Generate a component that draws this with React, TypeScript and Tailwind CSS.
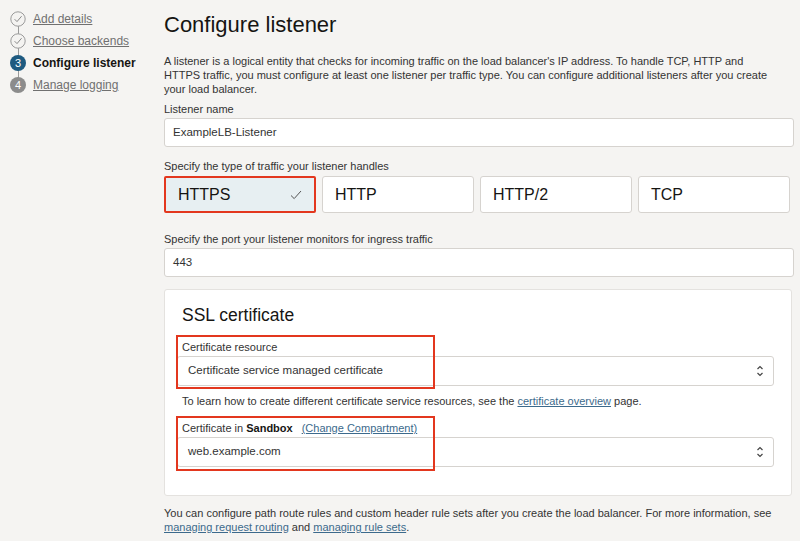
const font = { fontFamily: '"Liberation Sans", Arial, sans-serif' };

function DoneIcon() {
  return (
    <svg width="16" height="16" viewBox="0 0 16 16" className="shrink-0">
      <circle cx="8" cy="8" r="7.2" fill="#f4f3f1" stroke="#9a9a9a" strokeWidth="1" />
      <path d="M4.6 8.2 L7 10.6 L11.6 5.2" fill="none" stroke="#8a8a8a" strokeWidth="1" />
    </svg>
  );
}

function NumIcon({ n, color }: { n: number; color: string }) {
  return (
    <span
      className="w-4 h-4 rounded-full flex items-center justify-center text-[11px] text-white shrink-0"
      style={{ backgroundColor: color }}
    >
      {n}
    </span>
  );
}

function UpDown() {
  return (
    <svg width="10" height="14" viewBox="0 0 10 14" className="shrink-0">
      <path d="M2.5 5 L5 2.5 L7.5 5" fill="none" stroke="#444" strokeWidth="1.2" />
      <path d="M2.5 9 L5 11.5 L7.5 9" fill="none" stroke="#444" strokeWidth="1.2" />
    </svg>
  );
}

function Steps() {
  return (
    <div className="w-[164px] shrink-0 pl-[10px] pt-[11px] relative text-[12px]">
      {/* connector line */}
      <div className="absolute left-[18px] top-[26px] h-[56px] w-px bg-[#9a9a9a]" />
      <div className="flex flex-col gap-[6px] relative">
        <div className="flex items-center gap-[7px] h-[16px]">
          <DoneIcon />
          <span className="underline text-[#707070]">Add details</span>
        </div>
        <div className="flex items-center gap-[7px] h-[16px]">
          <DoneIcon />
          <span className="underline text-[#707070]">Choose backends</span>
        </div>
        <div className="flex items-center gap-[7px] h-[16px]">
          <NumIcon n={3} color="#1e5a80" />
          <span className="font-bold text-[#161513]">Configure listener</span>
        </div>
        <div className="flex items-center gap-[7px] h-[16px]">
          <NumIcon n={4} color="#8c8c8c" />
          <span className="underline text-[#707070]">Manage logging</span>
        </div>
      </div>
    </div>
  );
}

function Field({ label, value }: { label: string; value: string }) {
  return (
    <div className="flex flex-col">
      <div className="text-[11px] text-[#333] h-[17px] leading-[17px]">{label}</div>
      <div className="h-[29px] bg-white border border-[#d6d3cf] rounded-[3px] flex items-center px-[8px] text-[11.5px] text-[#333]">
        {value}
      </div>
    </div>
  );
}

function Select({ value }: { value: string }) {
  return (
    <div className="h-[30px] bg-white border border-[#d6d3cf] rounded-[3px] flex items-center justify-between pl-[10px] pr-[8px] text-[11.5px] text-[#333]">
      <span>{value}</span>
      <UpDown />
    </div>
  );
}

function Tile({ label, selected }: { label: string; selected?: boolean }) {
  return (
    <div
      className={
        selected
          ? "h-[37px] flex items-center justify-between px-[12px] bg-[#e7eff2] border-2 border-[#e3371e] rounded-[2px] text-[16px] text-[#161513]"
          : "h-[37px] flex items-center px-[12px] bg-white border border-[#d6d3cf] rounded-[3px] text-[16px] text-[#161513]"
      }
    >
      <span>{label}</span>
      {selected && (
        <svg width="12" height="10" viewBox="0 0 12 10">
          <path d="M1 5.5 L4.2 8.6 L11 1" fill="none" stroke="#555" strokeWidth="1" />
        </svg>
      )}
    </div>
  );
}

export default function App() {
  return (
    <div className="w-[800px] h-[541px] bg-[#f5f4f2] flex overflow-hidden" style={font}>
      <Steps />

      <div className="w-[630px] pt-[11px] flex flex-col">
        <h1 className="text-[22px] font-light text-[#161513] leading-[28px]">Configure listener</h1>

        <p className="mt-[15px] text-[11px] leading-[14px] text-[#333] whitespace-nowrap">
          A listener is a logical entity that checks for incoming traffic on the load balancer's IP address. To handle TCP, HTTP and
          <br />
          HTTPS traffic, you must configure at least one listener per traffic type. You can configure additional listeners after you create
          <br />
          your load balancer.
        </p>

        <div className="mt-[5px]">
          <Field label="Listener name" value="ExampleLB-Listener" />
        </div>

        <div className="mt-[10px] text-[11px] text-[#333] h-[19px] leading-[19px]">
          Specify the type of traffic your listener handles
        </div>
        <div className="grid grid-cols-4 gap-[6px] pr-[4px]">
          <Tile label="HTTPS" selected />
          <Tile label="HTTP" />
          <Tile label="HTTP/2" />
          <Tile label="TCP" />
        </div>

        <div className="mt-[18px]">
          <Field label="Specify the port your listener monitors for ingress traffic" value="443" />
        </div>

        <div className="mt-[12px] bg-white border border-[#e4e2df] rounded-[3px] pl-[12px] pr-[17px] pt-[14px] pb-[28px] mr-[2px]">
          <h2 className="text-[17.5px] font-light text-[#161513] leading-[22px] pl-[5px]">SSL certificate</h2>

          <div className="relative mt-[13px]">
            <div className="absolute -left-[1px] -top-[4px] w-[259px] h-[54px] border-2 border-[#e3371e] pointer-events-none z-10" />
            <div className="text-[11px] text-[#333] h-[17px] leading-[17px] pl-[5px]">Certificate resource</div>
            <Select value="Certificate service managed certificate" />
          </div>

          <div className="mt-[8px] text-[11px] text-[#333] leading-[14px] pl-[5px]">
            To learn how to create different certificate service resources, see the{" "}
            <span className="underline text-[#3c6a8c]">certificate overview</span> page.
          </div>

          <div className="relative mt-[12px]">
            <div className="absolute -left-[1px] -top-[4px] w-[259px] h-[55px] border-2 border-[#e3371e] pointer-events-none z-10" />
            <div className="text-[11px] text-[#333] h-[17px] leading-[17px] pl-[5px]">
              Certificate in <span className="font-bold text-[#161513]">Sandbox</span>
              <span className="ml-[9px] underline text-[#3c6a8c]">(Change Compartment)</span>
            </div>
            <Select value="web.example.com" />
          </div>
        </div>

        <p className="mt-[10px] text-[11px] leading-[14px] text-[#333]">
          You can configure path route rules and custom header rule sets after you create the load balancer. For more information, see{" "}
          <span className="underline text-[#3c6a8c]">managing request routing</span> and{" "}
          <span className="underline text-[#3c6a8c]">managing rule sets</span>.
        </p>
      </div>
    </div>
  );
}
